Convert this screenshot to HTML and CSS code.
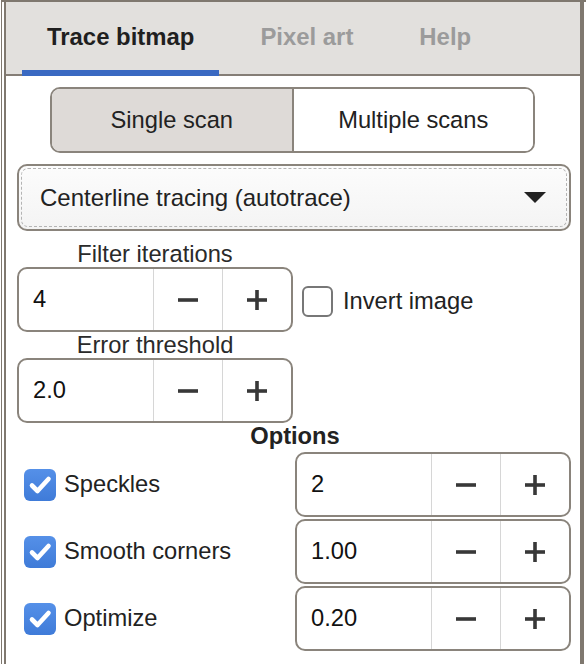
FILE: index.html
```html
<!DOCTYPE html>
<html lang="en">
<head>
<meta charset="utf-8">
<title>Trace bitmap</title>
<link rel="stylesheet" href="styles.css">
</head>
<body>
<div class="frame">
  <div class="panel">
    <nav class="tabs">
      <div class="tab active">Trace bitmap</div>
      <div class="tab">Pixel art</div>
      <div class="tab">Help</div>
    </nav>
    <div class="content">
      <div class="segmented">
        <div class="seg selected">Single scan</div>
        <div class="seg">Multiple scans</div>
      </div>
      <div class="select">
        <div class="select-inner">
          <span>Centerline tracing (autotrace)</span>
          <svg class="caret" width="22" height="11" viewBox="0 0 22 11"><path d="M0 0H22L11 11Z" fill="#222"/></svg>
        </div>
      </div>
      <div class="grid">
        <div class="field-label col1">Filter iterations</div>
        <div class="spin col1">
          <div class="spin-value">4</div>
          <div class="spin-btn"><svg width="20" height="20" viewBox="0 0 20 20"><rect x="0" y="8.2" width="20" height="3.6" fill="#383838"/></svg></div>
          <div class="spin-btn"><svg width="20" height="20" viewBox="0 0 20 20"><rect x="0" y="8.2" width="20" height="3.6" fill="#383838"/><rect x="8.2" y="0" width="3.6" height="20" fill="#383838"/></svg></div>
        </div>
        <label class="check invert col2"><span class="box"></span><span>Invert image</span></label>
        <div class="field-label col1">Error threshold</div>
        <div class="spin col1">
          <div class="spin-value">2.0</div>
          <div class="spin-btn"><svg width="20" height="20" viewBox="0 0 20 20"><rect x="0" y="8.2" width="20" height="3.6" fill="#383838"/></svg></div>
          <div class="spin-btn"><svg width="20" height="20" viewBox="0 0 20 20"><rect x="0" y="8.2" width="20" height="3.6" fill="#383838"/><rect x="8.2" y="0" width="3.6" height="20" fill="#383838"/></svg></div>
        </div>
        <div class="section-title">Options</div>
        <label class="check col1 opt"><span class="box on"><svg width="32" height="32" viewBox="0 0 32 32"><path d="M8 16.5L13.5 22L24.5 10" fill="none" stroke="#fff" stroke-width="4.6" stroke-linecap="round" stroke-linejoin="round"/></svg></span><span>Speckles</span></label>
        <div class="spin col2 opt">
          <div class="spin-value">2</div>
          <div class="spin-btn"><svg width="20" height="20" viewBox="0 0 20 20"><rect x="0" y="8.2" width="20" height="3.6" fill="#383838"/></svg></div>
          <div class="spin-btn"><svg width="20" height="20" viewBox="0 0 20 20"><rect x="0" y="8.2" width="20" height="3.6" fill="#383838"/><rect x="8.2" y="0" width="3.6" height="20" fill="#383838"/></svg></div>
        </div>
        <label class="check col1 opt"><span class="box on"><svg width="32" height="32" viewBox="0 0 32 32"><path d="M8 16.5L13.5 22L24.5 10" fill="none" stroke="#fff" stroke-width="4.6" stroke-linecap="round" stroke-linejoin="round"/></svg></span><span>Smooth corners</span></label>
        <div class="spin col2 opt">
          <div class="spin-value">1.00</div>
          <div class="spin-btn"><svg width="20" height="20" viewBox="0 0 20 20"><rect x="0" y="8.2" width="20" height="3.6" fill="#383838"/></svg></div>
          <div class="spin-btn"><svg width="20" height="20" viewBox="0 0 20 20"><rect x="0" y="8.2" width="20" height="3.6" fill="#383838"/><rect x="8.2" y="0" width="3.6" height="20" fill="#383838"/></svg></div>
        </div>
        <label class="check col1 opt"><span class="box on"><svg width="32" height="32" viewBox="0 0 32 32"><path d="M8 16.5L13.5 22L24.5 10" fill="none" stroke="#fff" stroke-width="4.6" stroke-linecap="round" stroke-linejoin="round"/></svg></span><span>Optimize</span></label>
        <div class="spin col2 opt">
          <div class="spin-value">0.20</div>
          <div class="spin-btn"><svg width="20" height="20" viewBox="0 0 20 20"><rect x="0" y="8.2" width="20" height="3.6" fill="#383838"/></svg></div>
          <div class="spin-btn"><svg width="20" height="20" viewBox="0 0 20 20"><rect x="0" y="8.2" width="20" height="3.6" fill="#383838"/><rect x="8.2" y="0" width="3.6" height="20" fill="#383838"/></svg></div>
        </div>
      </div>
    </div>
  </div>
</div>
</body>
</html>
```

FILE: styles.css
```css
* { box-sizing: border-box; }
html, body { margin: 0; padding: 0; background: #fff; }
body {
  font-family: "Liberation Sans", Arial, sans-serif;
  font-size: 23.7px;
  color: #222;
  width: 586px;
  height: 664px;
  overflow: hidden;
}
.frame {
  margin-left: 1px;
  border-left: 1px solid #7f786f;
  border-top: 2px solid #7f786f;
  padding: 0 2px;
  height: 664px;
}
.panel {
  border-left: 2px solid #7f786f;
  border-right: 4px solid #7f786f;
  height: 100%;
  background: #fff;
}
.tabs {
  display: flex;
  gap: 16px;
  height: 74px;
  padding-left: 16px;
  background: #e2e0dd;
  border-bottom: 2px solid #857e76;
}
.tab {
  position: relative;
  padding: 0 25px 2px;
  line-height: 70px;
  font-size: 23.9px;
  font-weight: bold;
  color: #9b9b9b;
  white-space: nowrap;
}
.tab.active { color: #1f1f1f; }
.tab.active::after {
  content: "";
  position: absolute;
  left: 0;
  right: 0;
  bottom: -2px;
  height: 6px;
  background: #3a69c2;
}
.content {
  padding: 11px 9px 0 11px;
}
.segmented {
  display: flex;
  width: 485px;
  height: 66px;
  margin: 0 0 0 33px;
  border: 2px solid #8a847c;
  border-radius: 10px;
  overflow: hidden;
}
.seg {
  flex: 1;
  display: flex;
  align-items: center;
  justify-content: center;
  background: #fff;
  color: #222;
}
.seg.selected {
  background: #dedad7;
  border-right: 2px solid #8a847c;
}
.select {
  margin-top: 11px;
  height: 67px;
  border: 2px solid #8a847c;
  border-radius: 10px;
  padding: 2px;
  background: linear-gradient(#fcfcfc, #f4f4f4);
  font-size: 24px;
}
.select-inner {
  height: 100%;
  border: 1px dashed #b4b4b4;
  border-radius: 7px;
  display: flex;
  align-items: center;
  justify-content: space-between;
  padding: 0 20px 0 18px;
  color: #222;
}
.caret { display: block; }
.grid {
  display: grid;
  grid-template-columns: 276px 276px;
  column-gap: 2px;
  margin-top: 10px;
}
.col1 { grid-column: 1; }
.col2 { grid-column: 2; }
.field-label {
  text-align: center;
  line-height: 26px;
  color: #2a2a2a;
}
.section-title {
  grid-column: 1 / span 2;
  text-align: center;
  font-weight: bold;
  line-height: 27px;
  margin-bottom: 2px;
  padding-left: 2px;
}
.spin {
  display: flex;
  height: 65px;
  border: 2px solid #8a847c;
  border-radius: 10px;
  background: #fff;
}
.spin.opt { margin-bottom: 2px; }
.spin-value {
  flex: 1;
  display: flex;
  align-items: center;
  padding-left: 14px;
  color: #111;
}
.spin-btn {
  width: 69px;
  border-left: 1px solid #d6d6d6;
  display: flex;
  align-items: center;
  justify-content: center;
}
.spin-btn svg { display: block; }
.check {
  display: flex;
  align-items: center;
  gap: 8px;
  padding-left: 7px;
  color: #222;
}
.check.opt { margin-bottom: 2px; }
.invert {
  grid-row: 2;
  padding-top: 4px;
  gap: 10px;
}
.box {
  width: 32px;
  height: 32px;
  flex: none;
  border-radius: 6px;
  display: flex;
  align-items: center;
  justify-content: center;
}
.invert .box {
  width: 31px;
  height: 31px;
  border: 2px solid #777;
  background: #fff;
}
.box.on {
  background: linear-gradient(#5590e8, #3f7bd8);
}
.box svg { display: block; }
```
